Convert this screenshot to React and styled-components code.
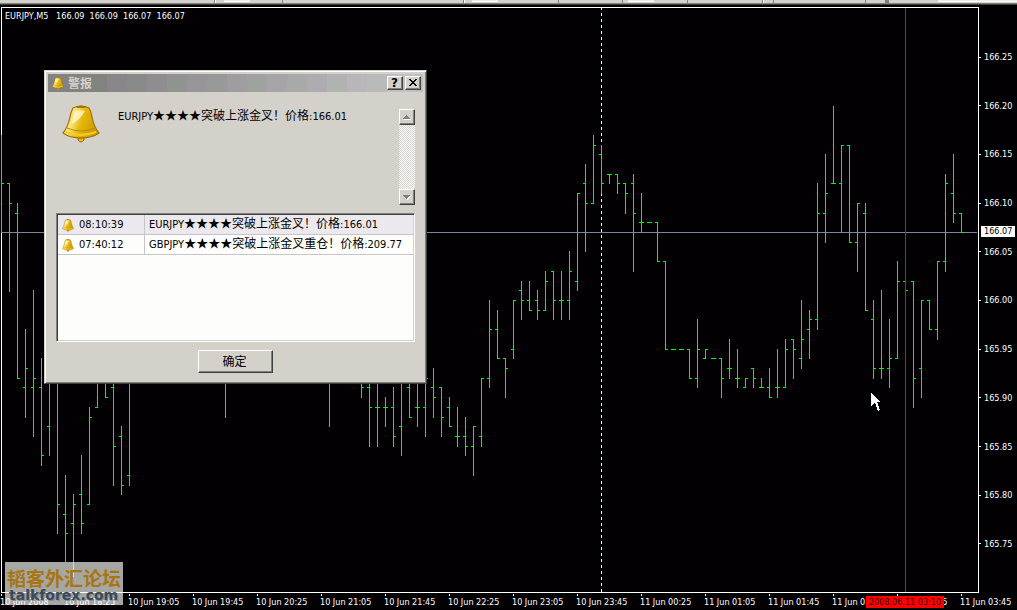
import styled, { createGlobalStyle, css } from "styled-components";

const face = "#d4d1cb";
const latin = '"DejaVu Sans Condensed", "DejaVu Sans", "Noto Sans CJK SC", sans-serif';

const GlobalStyle = createGlobalStyle`
  * {
    box-sizing: border-box;
  }
  body {
    margin: 0;
    background: #020003;
    overflow: hidden;
  }
`;

const Page = styled.main`
  position: relative;
  min-height: 100vh;
  overflow: hidden;
  background: #020003;
  color: white;
  font-family: ${latin};
  font-size: 9px;
  line-height: 12px;
`;

const Toolbar = styled.div`
  display: flex;
  height: 5px;
  margin-bottom: 2px;
  background: ${face};
  border-bottom: 1px solid #404040;
  box-shadow: inset 0 -1px #808080;
`;

const ToolMark = styled.span`
  flex: none;
  height: ${(p) => (p.$wide ? "2px" : "3px")};
  width: ${(p) => p.$width}px;
  margin-left: ${(p) => p.$gap}px;
  background: ${(p) => (p.$wide ? "#ecebe8" : "#808080")};
  border-bottom: ${(p) => (p.$wide ? "1px solid white" : "none")};
  border-right: ${(p) => (p.$divider ? "1px solid white" : "none")};
`;

const ChartGrid = styled.section`
  display: grid;
  grid-template-columns: minmax(0, 1fr) 38px;
`;

const Plot = styled.div`
  position: relative;
  margin-left: 1px;
  border: 1px solid white;
`;

const PlotSvg = styled.svg`
  display: block;
  width: 100%;
  height: 584px;
  overflow: visible;
`;

const SymbolLine = styled.h1`
  position: absolute;
  left: 3px;
  top: 2px;
  margin: 0;
  font-size: 9px;
  font-weight: 400;
  line-height: 12px;
  white-space: pre;
`;

const PriceAxis = styled.div`
  position: relative;
  display: flex;
  flex-direction: column;
  justify-content: space-between;
  padding: 44px 0 43px;
`;

const Price = styled.div`
  display: flex;
  align-items: center;
  gap: 3px;
  height: 12px;

  &::before {
    content: "";
    width: 2px;
    height: 1px;
    background: white;
  }
`;

const LastPrice = styled.div`
  position: absolute;
  left: 2px;
  top: 219px;
  width: 34px;
  height: 11px;
  padding-left: 3px;
  background: white;
  color: black;
  line-height: 11px;
`;

const TimeAxis = styled.div`
  position: relative;
  display: flex;
  margin-right: -38px;
  overflow: hidden;
`;

const Time = styled.div`
  flex: none;
  width: 64px;
  padding-top: 1px;
  white-space: nowrap;

  &::before {
    content: "";
    display: block;
    width: 1px;
    height: 2px;
    margin-left: 1px;
    background: white;
  }
`;

const TimeBadge = styled.div`
  position: absolute;
  left: 866px;
  top: 3px;
  width: 78px;
  height: 12px;
  background: #ff0000;
  color: #300000;
  text-align: center;
  line-height: 12px;
`;

const Watermark = styled.div`
  position: absolute;
  left: 5px;
  top: 562px;
  width: 118px;
  height: 43px;
  padding: 5px 0 0 2px;
  background: rgba(255, 255, 248, 0.65);
  color: #a87516;
  font-family: "Noto Sans CJK SC", sans-serif;
  font-size: 19px;
  font-weight: 700;
  line-height: 21px;
  white-space: nowrap;
`;

const SiteName = styled.div`
  padding-left: 2px;
  color: #40474f;
  font-family: "DejaVu Sans", sans-serif;
  font-size: 14px;
  font-weight: 700;
  line-height: 14px;
  text-shadow: 1px 1px #7790ad;
`;

const raised = css`
  border: 1px solid;
  border-color: white #404040 #404040 white;
  box-shadow: inset -1px -1px #808080;
  background: ${face};
`;

const Dialog = styled.section`
  position: absolute;
  left: 44px;
  top: 70px;
  width: 383px;
  padding: 3px;
  background: ${face};
  border: 1px solid;
  border-color: ${face} #404040 #404040 ${face};
  box-shadow: inset 1px 1px white, inset -1px -1px #808080;
  color: black;
  font-size: 11px;
`;

const TitleBar = styled.header`
  display: flex;
  align-items: center;
  gap: 2px;
  height: 18px;
  padding: 0 2px 0 4px;
  background: linear-gradient(
    90deg,
    #838182 0 39px, #80837e 39px 59px, #898589 59px 79px, #888b87 79px 99px,
    #908d90 99px 119px, #90938f 119px 139px, #989599 139px 159px, #979a96 159px 179px,
    #a09da1 179px 199px, #9fa29e 199px 219px, #a7a4a8 219px 239px, #a8aaa7 239px 259px,
    #afacb1 259px 279px, #b0b3af 279px 299px, #b9b5bb 299px 319px, #b8bbb7 319px 339px,
    #c1bec3 339px
  );
`;

const Title = styled.h2`
  flex: 1;
  margin: 0;
  padding-left: 2px;
  color: ${face};
  font-family: "Noto Sans CJK SC", sans-serif;
  font-size: 12px;
  font-weight: 700;
  line-height: 18px;
`;

const CaptionButton = styled.button`
  ${raised}
  display: flex;
  align-items: center;
  justify-content: center;
  width: 16px;
  height: 14px;
  padding: 0 1px 1px 0;
  color: black;
  font-family: "DejaVu Sans", sans-serif;
  font-size: 12px;
  font-weight: 700;
  line-height: 12px;
`;

const Body = styled.div`
  padding: 13px 8px 7px;
`;

const Message = styled.div`
  display: grid;
  grid-template-columns: 56px 1fr 16px;
  height: 108px;
  padding: 0 0 8px 6px;
`;

const MessageText = styled.p`
  margin: 0;
  padding-top: 4px;
  line-height: 14px;
  white-space: nowrap;
`;

const Wide = styled.span`
  font-family: "Noto Sans CJK SC", sans-serif;
  font-size: 12px;
  line-height: 1;
`;

const ScrollBar = styled.div`
  display: flex;
  flex-direction: column;
  justify-content: space-between;
  margin-top: 4px;
  background: repeating-conic-gradient(white 0 25%, ${face} 0 50%) 0 0 / 2px 2px;
`;

const ScrollButton = styled.button`
  ${raised}
  display: flex;
  align-items: center;
  justify-content: center;
  width: 16px;
  height: 16px;
  padding: 0;
`;

const ListBox = styled.div`
  height: 129px;
  background: #fdfefc;
  border: 1px solid;
  border-color: #808080 white white #808080;
  box-shadow: inset 1px 1px #404040, inset -1px -1px ${face};
  padding: 1px;
`;

const Table = styled.table`
  width: 100%;
  border-collapse: separate;
  border-spacing: 0;
  table-layout: fixed;
`;

const Row = styled.tr`
  background: ${(p) => (p.$selected ? "#ece9ee" : "#fdfefc")};
`;

const Cell = styled.td`
  width: ${(p) => (p.$time ? "87px" : "auto")};
  height: 20px;
  padding: 1px 0 0 4px;
  border-bottom: 1px solid #c8c5c8;
  border-right: ${(p) => (p.$time ? "1px solid #c8c5c8" : "none")};
  line-height: 18px;
  white-space: nowrap;
`;

const TimeStamp = styled.div`
  display: flex;
  align-items: center;
  gap: 5px;
`;

const Actions = styled.div`
  display: flex;
  justify-content: center;
  padding: 8px 0 0;
`;

const OkButton = styled.button`
  ${raised}
  width: 75px;
  height: 23px;
  padding: 0 2px 2px 0;
  color: black;
  font-family: "Noto Sans CJK SC", sans-serif;
  font-size: 12px;
  line-height: 18px;
`;

const Pointer = styled.svg`
  position: absolute;
  left: 871px;
  top: 393px;
`;

// x, high, low, open, close (null when there is no tick)
const bars = [
  [1, 135, 232, null, 183], [9, 183, 291, 183, 203], [17, 203, 378, 213, 378],
  [25, 329, 417, 387, 368], [33, 290, 436, 387, 378], [41, 358, 465, 387, 455],
  [49, 378, 455, 426, null], [57, 378, 533, null, 504], [65, 475, 561, 514, 533],
  [73, 494, 576, 523, 504], [81, 455, 533, 494, 523], [89, 407, 504, 504, 417],
  [97, 378, 407, 407, null], [105, 368, 397, null, 397], [113, 368, 485, 387, 446],
  [121, 426, 494, 436, 485], [129, 368, 485, 475, null], [225, 368, 417, null, null],
  [329, 368, 426, null, null], [361, 368, 397, null, 387], [369, 368, 446, 387, 407],
  [377, 368, 446, 407, 407], [385, 397, 426, 407, 407], [393, 387, 446, 407, 436],
  [401, 368, 455, 426, null], [409, 368, 417, 387, 417], [417, 368, 426, 407, 407],
  [425, 368, 436, 407, 378], [433, 368, 417, 387, 397], [441, 387, 436, 387, 417],
  [449, 397, 426, 407, 426], [457, 407, 446, 436, 436], [465, 417, 455, 436, 446],
  [473, 426, 475, 446, 426], [481, 378, 446, 436, 378], [489, 300, 387, 378, 329],
  [497, 310, 358, 329, 358], [505, 358, 397, 358, 368], [513, 300, 358, 349, 300],
  [521, 281, 319, 290, 300], [529, 281, 310, 300, 310], [537, 290, 319, 300, 310],
  [545, 271, 310, 310, 281], [553, 271, 319, 271, 300], [561, 271, 319, 300, 300],
  [569, 251, 319, 300, 271], [577, 193, 290, 281, 193], [585, 164, 251, 183, 203],
  [593, 135, 203, 203, 145], [601, 145, 193, 154, 183], [609, 174, 183, 174, 174],
  [617, 174, 193, 174, 183], [625, 183, 213, 183, 193], [633, 174, 271, 183, 213],
  [641, 193, 232, 222, 222], [649, 222, 222, 222, 222], [657, 222, 261, 222, 261],
  [665, 261, 349, 261, 349], [673, 349, 349, 349, 349], [681, 349, 349, 349, 349],
  [689, 349, 378, 349, 378], [697, 319, 387, 378, 349], [705, 349, 358, 358, 349],
  [713, 358, 358, 358, 358], [721, 358, 397, 358, 378], [729, 339, 378, 368, 368],
  [737, 349, 387, 378, 378], [745, 378, 387, 387, 378], [753, 368, 387, 368, 378],
  [761, 378, 387, 387, 387], [769, 368, 397, 387, 397], [777, 349, 397, 387, 387],
  [785, 339, 387, 387, 349], [793, 339, 378, 339, 349], [801, 300, 368, 358, 339],
  [809, 310, 358, 329, 319], [817, 183, 329, 319, 213], [825, 154, 242, 213, 193],
  [833, 106, 183, 183, 183], [841, 145, 232, 183, 145], [849, 145, 242, 145, 242],
  [857, 203, 271, 242, 203], [865, 203, 310, 213, 310], [873, 300, 378, 319, 368],
  [881, 290, 378, 368, 368], [889, 319, 387, 368, 358], [897, 261, 358, 358, 281],
  [905, 281, 290, 281, 290], [913, 281, 407, 281, 378], [921, 300, 397, 368, 300],
  [929, 300, 329, 300, 329], [937, 261, 339, 329, 261], [945, 174, 271, 261, 183],
  [953, 154, 222, 193, 213], [961, 213, 232, 213, 232],
];

const barPath = bars
  .map(([x, high, low, open, close]) => {
    let d = `M${x} ${high}h1V${low + 1}h-1z`;
    if (open !== null) d += `M${x - 2} ${open}h2v1h-2z`;
    if (close !== null) d += `M${x + 1} ${close}h2v1h-2z`;
    return d;
  })
  .join("");

const prices = [
  "166.25", "166.20", "166.15", "166.10", "166.05", "166.00",
  "165.95", "165.90", "165.85", "165.80", "165.75",
];

const times = [
  "10 Jun 2008", "10 Jun 18:25", "10 Jun 19:05", "10 Jun 19:45", "10 Jun 20:25",
  "10 Jun 21:05", "10 Jun 21:45", "10 Jun 22:25", "10 Jun 23:05", "10 Jun 23:45",
  "11 Jun 00:25", "11 Jun 01:05", "11 Jun 01:45", "11 Jun 02:25", "11 Jun 03:05",
  "11 Jun 03:45",
];

const toolMarks = [
  { gap: 214, width: 2, divider: true }, { gap: 8, width: 26, wide: true },
  { gap: 32, width: 1 }, { gap: 180, width: 2, divider: true },
  { gap: 7, width: 26, wide: true }, { gap: 60, width: 1 }, { gap: 63, width: 1 },
  { gap: 5, width: 26, wide: true }, { gap: 33, width: 1 },
  { gap: 74, width: 2, divider: true }, { gap: 9, width: 1 }, { gap: 91, width: 1 },
  { gap: 19, width: 4 }, { gap: 49, width: 90, wide: true },
];

const alerts = [
  { time: "08:10:39", pair: "EURJPY", text: "突破上涨金叉！价格", price: "166.01" },
  { time: "07:40:12", pair: "GBPJPY", text: "突破上涨金叉重仓！价格", price: "209.77" },
];

function AlertText({ alert }) {
  return (
    <>
      {alert.pair}
      <Wide>★★★★{alert.text}</Wide>:{alert.price}
    </>
  );
}

function Bell({ width, height, id }) {
  return (
    <svg width={width} height={height} viewBox="0 0 38 38" preserveAspectRatio="none" aria-hidden="true">
      <defs>
        <linearGradient id={id} x1="0" x2="1" y1="0" y2="0.3">
          <stop offset="0" stopColor="#e8b820" />
          <stop offset="0.35" stopColor="#fbe680" />
          <stop offset="0.6" stopColor="#e6b80c" />
          <stop offset="1" stopColor="#d09c04" />
        </linearGradient>
      </defs>
      <path d="M16 33h6v2q-3 4-6 0z" fill="#e8b810" stroke="#9a6a10" />
      <path
        d="M11 3Q19-1 27 3Q29 6 30 12Q32 22 37 28Q30 33 19 33Q8 33 1 28Q6 22 8 12Q9 6 11 3z"
        fill={`url(#${id})`}
        stroke="#a0700c"
        strokeWidth="1.2"
      />
      <path d="M5 23Q19 29 33 23" fill="none" stroke="#b88a10" />
      <path d="M4 27Q19 33 34 27" fill="none" stroke="#f6cc20" strokeWidth="2" />
      <path d="M13 6Q18 5 23 6Q18 15 10 19Q11 10 13 6z" fill="#fffbe0" opacity="0.7" />
      <path d="M14 2Q19-1 24 2L23 3H15z" fill="#a87408" />
    </svg>
  );
}

function Chart() {
  return (
    <ChartGrid>
      <Plot>
        <PlotSvg shapeRendering="crispEdges">
          <rect x="-1" y="224" width="100%" height="1" fill="#778899" />
          <g transform="translate(-2 -8)">
            <path d="M601.5 7V592" stroke="white" strokeDasharray="3 3" />
            <path d={barPath} fill="#00ff00" />
            <path d="M905.5 8V592" stroke="#e60c10" />
          </g>
        </PlotSvg>
        <SymbolLine>EURJPY,M5   166.09  166.09  166.07  166.07</SymbolLine>
      </Plot>
      <PriceAxis>
        {prices.map((price) => (
          <Price key={price}>{price}</Price>
        ))}
        <LastPrice>166.07</LastPrice>
      </PriceAxis>
      <TimeAxis>
        {times.map((time) => (
          <Time key={time}>{time}</Time>
        ))}
        <TimeBadge>2008.06.11 03:10</TimeBadge>
      </TimeAxis>
    </ChartGrid>
  );
}

function AlertDialog() {
  return (
    <Dialog role="dialog" aria-labelledby="alert-title">
      <TitleBar>
        <Bell width={12} height={13} id="bell-title" />
        <Title id="alert-title">警报</Title>
        <CaptionButton type="button" aria-label="Help">?</CaptionButton>
        <CaptionButton type="button" aria-label="Close">
          <svg width="8" height="7" viewBox="0 0 8 7" shapeRendering="crispEdges">
            <path
              d="M0 0h2v1h1v1h2v-1h1v-1h2v1h-1v1h-1v1h-1v1h1v1h1v1h1v1h-2v-1h-1v-1h-2v1h-1v1h-2v-1h1v-1h1v-1h1v-1h-1v-1h-1v-1h-1z"
              fill="black"
            />
          </svg>
        </CaptionButton>
      </TitleBar>
      <Body>
        <Message>
          <Bell width={38} height={38} id="bell-large" />
          <MessageText>
            <AlertText alert={alerts[0]} />
          </MessageText>
          <ScrollBar>
            <ScrollButton type="button" aria-label="Scroll up">
              <svg width="8" height="5" shapeRendering="crispEdges">
                <path d="M3 0h1v1h1v1h1v1h1v1H0v-1h1v-1h1v-1h1z" fill="#808080" />
                <path d="M1 4h7v1H1z" fill="white" />
              </svg>
            </ScrollButton>
            <ScrollButton type="button" aria-label="Scroll down">
              <svg width="8" height="5" shapeRendering="crispEdges">
                <path d="M1 1h7v1h-1v1h-1v1h-1v1h-1z" fill="white" />
                <path d="M0 0h7v1h-1v1h-1v1h-1v1h-1v-1h-1v-1h-1v-1h-1z" fill="#808080" />
              </svg>
            </ScrollButton>
          </ScrollBar>
        </Message>
        <ListBox>
          <Table>
            <tbody>
              {alerts.map((alert, i) => (
                <Row key={alert.time} $selected={i === 0}>
                  <Cell $time>
                    <TimeStamp>
                      <Bell width={12} height={13} id={`bell-row-${i}`} />
                      {alert.time}
                    </TimeStamp>
                  </Cell>
                  <Cell>
                    <AlertText alert={alert} />
                  </Cell>
                </Row>
              ))}
            </tbody>
          </Table>
        </ListBox>
        <Actions>
          <OkButton type="button">确定</OkButton>
        </Actions>
      </Body>
    </Dialog>
  );
}

export default function App() {
  return (
    <>
      <GlobalStyle />
      <Page>
        <Toolbar>
          {toolMarks.map((mark, i) => (
            <ToolMark
              key={i}
              $gap={mark.gap}
              $width={mark.width}
              $wide={mark.wide}
              $divider={mark.divider}
            />
          ))}
        </Toolbar>
        <Chart />
        <Watermark>
          韬客外汇论坛
          <SiteName>talkforex.com</SiteName>
        </Watermark>
        <AlertDialog />
        <Pointer width="11" height="19" viewBox="0 0 11 19" shapeRendering="crispEdges">
          <path d="M0 0L10 9H6L9 17L7 18L4 10L0 13z" fill="white" />
        </Pointer>
      </Page>
    </>
  );
}
